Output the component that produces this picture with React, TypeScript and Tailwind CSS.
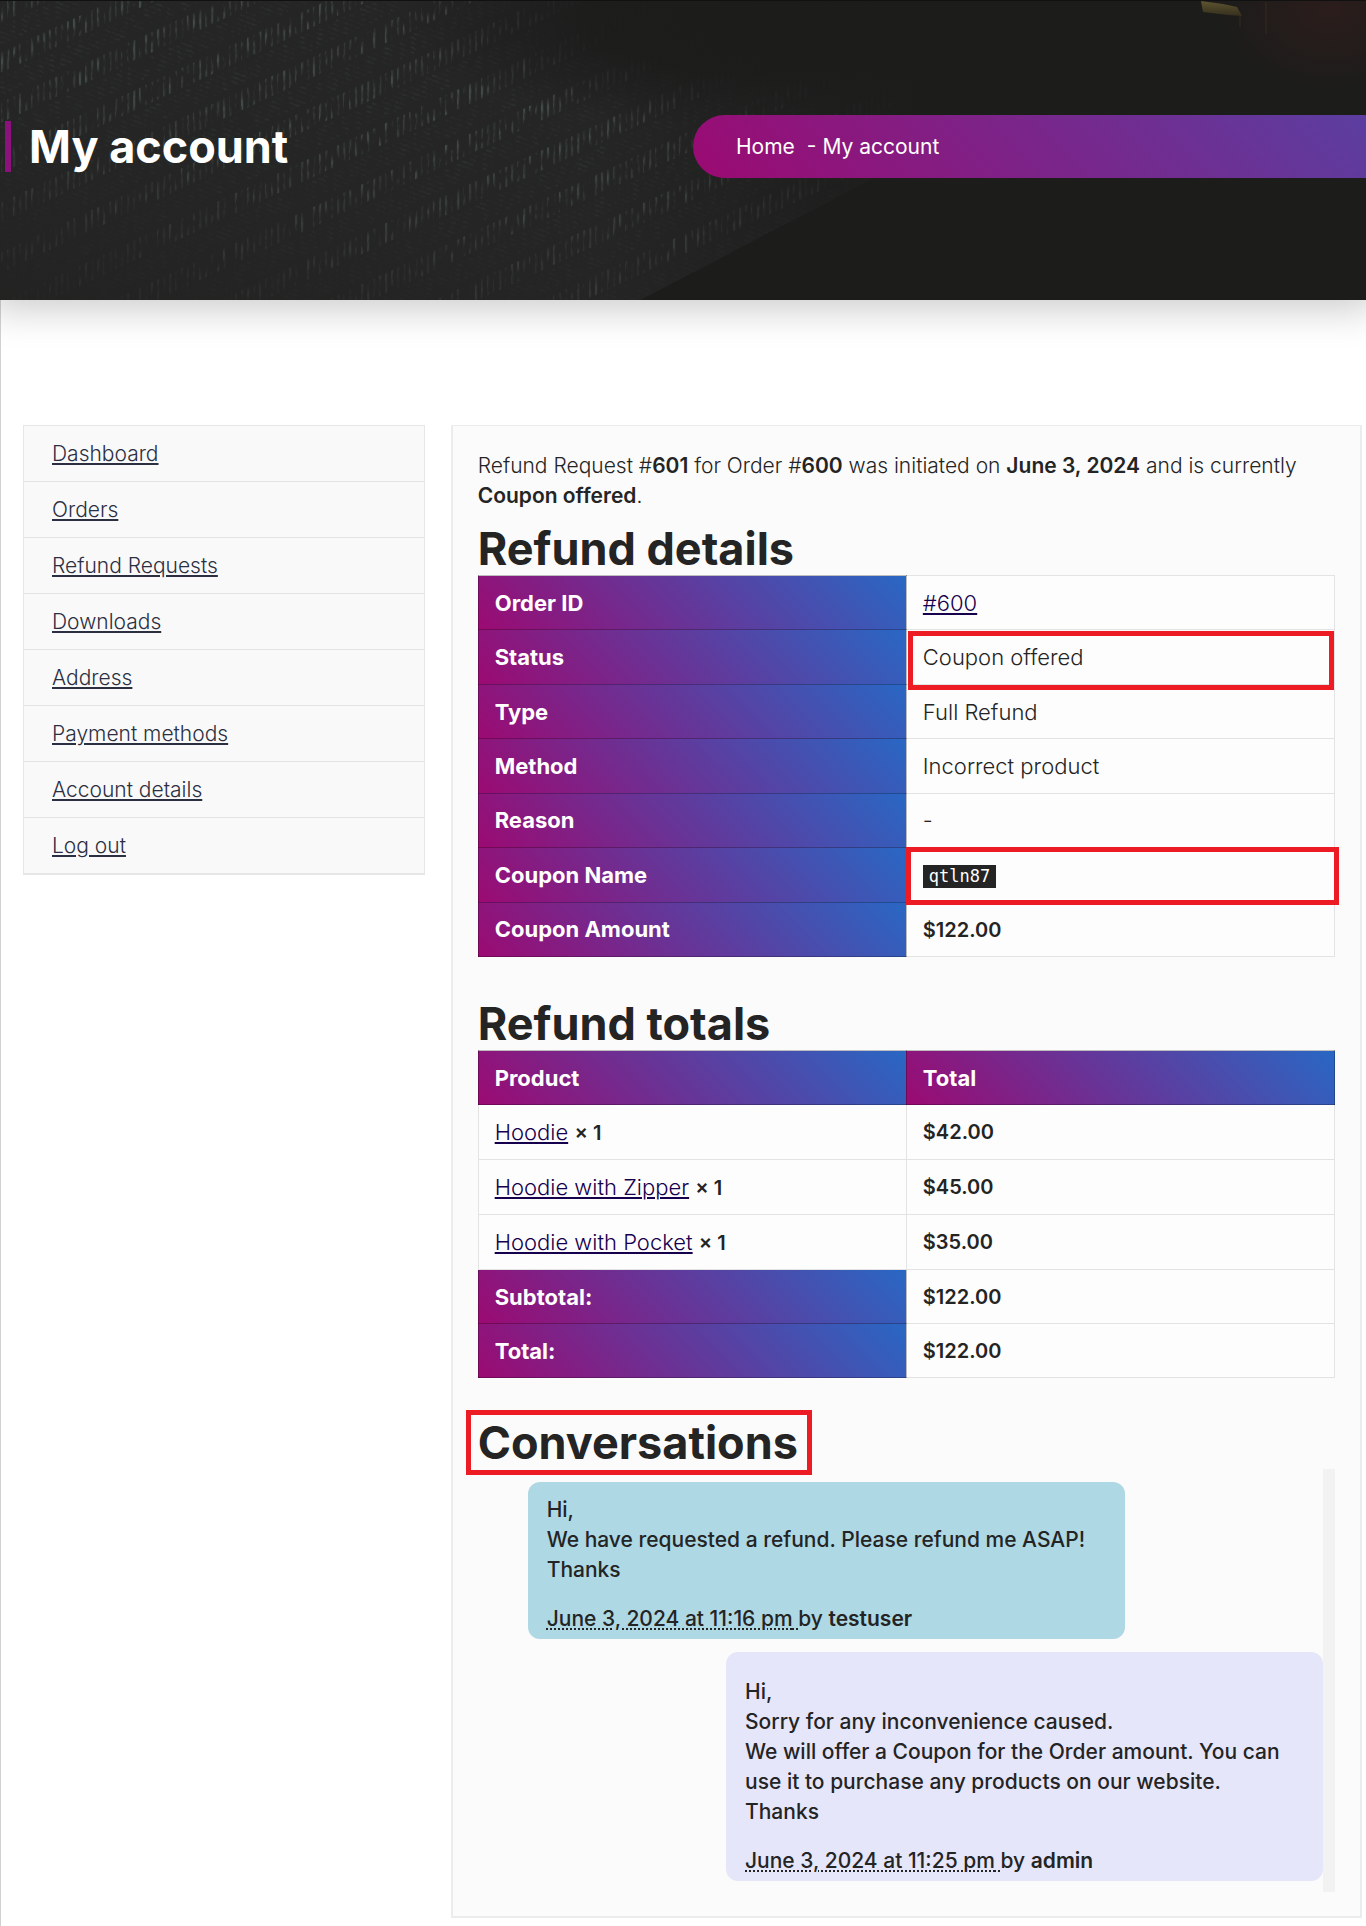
import type { ReactNode } from "react";

const NAV_ITEMS = [
  "Dashboard",
  "Orders",
  "Refund Requests",
  "Downloads",
  "Address",
  "Payment methods",
  "Account details",
  "Log out",
];

const PRODUCTS = [
  { name: "Hoodie", qty: 1, total: "$42.00" },
  { name: "Hoodie with Zipper", qty: 1, total: "$45.00" },
  { name: "Hoodie with Pocket", qty: 1, total: "$35.00" },
];

const TOTALS = [
  { label: "Subtotal:", value: "$122.00" },
  { label: "Total:", value: "$122.00" },
];

const HEAD_CELL =
  "border border-black/25 bg-[linear-gradient(45deg,#9b0a72,#2967c4)] bg-origin-border px-4 text-left font-bold text-white";
const BODY_CELL = "border border-[#e3e3e3] px-4";

// Dark herringbone cloth behind the page title
function BannerArt() {
  return (
    <svg
      className="absolute inset-0 h-full w-full"
      viewBox="0 0 1366 300"
      preserveAspectRatio="xMidYMid slice"
      aria-hidden
    >
      <defs>
        <pattern id="weave" width="6" height="50" patternUnits="userSpaceOnUse" patternTransform="skewY(-25)">
          <path d="M2 3V23" stroke="#48524e" strokeWidth="2" />
          <path d="M0 27l6 4M0 32l6 4M0 37l6 4M0 42l6 4" stroke="#313532" strokeWidth="1" />
        </pattern>
        <filter id="grain" x="0" y="0" width="100%" height="100%" colorInterpolationFilters="sRGB">
          <feTurbulence type="fractalNoise" baseFrequency="0.18 0.07" numOctaves="3" seed="4" />
          <feColorMatrix values="0 0 0 0 0.14  0 0 0 0 0.145  0 0 0 0 0.14  2.6 0 0 0 -0.6" />
        </filter>
        <linearGradient id="clothShade" x1="0" y1="1" x2="0.6" y2="0">
          <stop offset="0" stopColor="#222221" stopOpacity="0.85" />
          <stop offset="0.6" stopColor="#252625" stopOpacity="0" />
        </linearGradient>
        <linearGradient id="fadeRight">
          <stop offset="0.6" stopColor="#1c1c1b" stopOpacity="0" />
          <stop offset="0.92" stopColor="#1c1c1b" />
        </linearGradient>
        <radialGradient id="dark">
          <stop offset="0" stopColor="#1c1c1b" />
          <stop offset="0.5" stopColor="#1c1c1b" stopOpacity="0.95" />
          <stop offset="1" stopColor="#1c1c1b" stopOpacity="0" />
        </radialGradient>
        <radialGradient id="ember">
          <stop offset="0" stopColor="#2b1d1b" />
          <stop offset="1" stopColor="#2b1d1b" stopOpacity="0" />
        </radialGradient>
        <linearGradient id="brass" x1="0" y1="0" x2="0" y2="1">
          <stop offset="0" stopColor="#5e5430" />
          <stop offset="1" stopColor="#352f1d" />
        </linearGradient>
        <clipPath id="cloth">
          <path d="M0 0H1000V110L873 178L640 300H0Z" />
        </clipPath>
      </defs>
      <rect width="1366" height="300" fill="#1c1c1b" />
      <g clipPath="url(#cloth)">
        <rect width="1000" height="300" fill="#242625" />
        <rect width="1000" height="300" fill="url(#weave)" />
        <rect width="1000" height="300" filter="url(#grain)" />
        <rect width="1000" height="300" fill="url(#clothShade)" />
        <rect width="1000" height="300" fill="url(#fadeRight)" />
        <ellipse cx="790" cy="20" rx="400" ry="110" fill="url(#dark)" />
      </g>
      <ellipse cx="1330" cy="10" rx="110" ry="80" fill="url(#ember)" />
      <path d="M1201 1l22 3 14 3 5 9-14-1-25-3z" fill="url(#brass)" />
      <path d="M1240 15v12M1266 2v32" stroke="#332d1e" strokeWidth="1" />
      <rect width="1366" height="1" fill="#111" />
    </svg>
  );
}

function PageBanner() {
  return (
    <header className="relative flex h-[300px] items-center bg-[#1c1c1b] pb-2 shadow-[0_0_36px_10px_rgba(0,0,0,0.2)]">
      <BannerArt />
      <div className="relative w-[693px] shrink-0 pl-[5px]">
        <div className="flex items-center">
          <span className="h-[51px] w-[6px] bg-[#8b127c]" />
          <h1 className="ml-[18px] text-[45px] leading-[51px] font-bold text-white">My account</h1>
        </div>
      </div>
      <nav className="relative flex-1 overflow-hidden rounded-l-full" aria-label="Breadcrumb">
        <div className="w-[185%] bg-[linear-gradient(45deg,#9b0a72,#2967c4)] pl-[43px] leading-[63px] text-white">
          <a href="#">Home</a>
          <span className="ml-3">- My account</span>
        </div>
      </nav>
    </header>
  );
}

function AccountNav() {
  return (
    <nav className="w-[30%] shrink-0 self-start border border-b-2 border-[#e6e6e6] bg-[#f9f9f9]">
      <ul className="divide-y divide-[#e3e3e3]">
        {NAV_ITEMS.map((item) => (
          <li key={item} className="px-7 pt-[13px] pb-3 leading-[30px]">
            <a href="#" className="font-light text-[#2b2f42] underline decoration-2 underline-offset-2">
              {item}
            </a>
          </li>
        ))}
      </ul>
    </nav>
  );
}

function SectionTitle({ children }: { children: ReactNode }) {
  return <h2 className="text-[45px] leading-[50px] font-bold text-[#242424]">{children}</h2>;
}

function CellLink({ children }: { children: ReactNode }) {
  return (
    <a href="#" className="text-[#16004d] underline decoration-2 underline-offset-2">
      {children}
    </a>
  );
}

function DetailRow({ label, mark, children }: { label: string; mark?: ReactNode; children: ReactNode }) {
  return (
    <tr>
      <th scope="row" className={`w-1/2 ${HEAD_CELL}`}>
        {label}
      </th>
      <td className={`relative w-1/2 ${BODY_CELL}`}>
        {children}
        {mark}
      </td>
    </tr>
  );
}

function RefundDetails() {
  return (
    <table className="mt-px h-[382px] w-full table-fixed border-collapse bg-[#fdfdfd] text-[22px] leading-[30px] font-light">
      <tbody>
        <DetailRow label="Order ID">
          <CellLink>#600</CellLink>
        </DetailRow>
        <DetailRow
          label="Status"
          mark={<span className="absolute top-px right-0 -bottom-[6px] left-px border-5 border-[#ed1c24]" />}
        >
          Coupon offered
        </DetailRow>
        <DetailRow label="Type">Full Refund</DetailRow>
        <DetailRow label="Method">Incorrect product</DetailRow>
        <DetailRow label="Reason">-</DetailRow>
        <DetailRow
          label="Coupon Name"
          mark={<span className="absolute -top-px -right-[5px] -bottom-[3px] -left-px border-5 border-[#ed1c24]" />}
        >
          <code className="inline-block bg-[#242424] px-[6px] align-middle font-['DejaVu_Sans_Mono',monospace] text-[17px] leading-[23px] font-normal text-white">
            qtln87
          </code>
        </DetailRow>
        <DetailRow label="Coupon Amount">
          <span className="text-xl font-semibold">$122.00</span>
        </DetailRow>
      </tbody>
    </table>
  );
}

function RefundTotals() {
  return (
    <table className="mt-px h-[328px] w-full table-fixed border-collapse bg-[#fdfdfd] text-[22px] leading-[30px] font-light">
      <thead>
        <tr className="h-[54px]">
          <th scope="col" className={HEAD_CELL}>
            Product
          </th>
          <th scope="col" className={HEAD_CELL}>
            Total
          </th>
        </tr>
      </thead>
      <tbody>
        {PRODUCTS.map((product) => (
          <tr key={product.name} className="h-[54px]">
            <td className={BODY_CELL}>
              <CellLink>{product.name}</CellLink> <strong className="text-xl font-semibold">× {product.qty}</strong>
            </td>
            <td className={`text-xl font-semibold ${BODY_CELL}`}>{product.total}</td>
          </tr>
        ))}
      </tbody>
      <tfoot>
        {TOTALS.map((row) => (
          <tr key={row.label} className="h-[54px]">
            <th scope="row" className={HEAD_CELL}>
              {row.label}
            </th>
            <td className={`text-xl font-semibold ${BODY_CELL}`}>{row.value}</td>
          </tr>
        ))}
      </tfoot>
    </table>
  );
}

function Message({ className, time, author, children }: {
  className: string;
  time: string;
  author: string;
  children: ReactNode;
}) {
  return (
    <article className={`w-[597px] max-w-full rounded-xl px-[19px] pb-[5px] font-medium ${className}`}>
      {children}
      <p className="mt-[19px]">
        <abbr className="underline decoration-dotted decoration-2 underline-offset-2">{time} </abbr>
        by <strong className="font-semibold">{author}</strong>
      </p>
    </article>
  );
}

function Conversations() {
  return (
    <div className="mt-px border-r-12 border-[#f2f2f2] pt-[13px] pb-[11px]">
      <Message className="ml-[50px] bg-[#add8e4] pt-[13px]" time="June 3, 2024 at 11:16 pm" author="testuser">
        <p>Hi,</p>
        <p>We have requested a refund. Please refund me ASAP!</p>
        <p>Thanks</p>
      </Message>
      <Message
        className="mt-[13px] ml-auto bg-[#e6e6fa] pt-[25px]"
        time="June 3, 2024 at 11:25 pm"
        author="admin"
      >
        <p>Hi,</p>
        <p>Sorry for any inconvenience caused.</p>
        <p>We will offer a Coupon for the Order amount. You can use it to purchase any products on our website.</p>
        <p>Thanks</p>
      </Message>
    </div>
  );
}

export default function App() {
  return (
    <div className="bg-white font-['Inter',sans-serif] text-[21px] leading-[30px] text-[#242424]">
      <PageBanner />
      <main className="flex items-start gap-[26px] border-l border-[#d2d2d2] pt-[125px] pr-1 pb-2 pl-[22px]">
        <AccountNav />
        <section className="min-w-0 flex-1 border-2 border-t border-[#ececec] bg-[#fbfbfb] px-[25px] pt-[25px] pb-6">
          <p className="font-light">
            Refund Request #<b className="font-semibold">601</b> for Order #<b className="font-semibold">600</b> was
            initiated on <b className="font-semibold">June 3, 2024</b> and is currently{" "}
            <b className="font-semibold">Coupon offered</b>.
          </p>
          <div className="mt-[13px]">
            <SectionTitle>Refund details</SectionTitle>
            <RefundDetails />
          </div>
          <div className="mt-[42px]">
            <SectionTitle>Refund totals</SectionTitle>
            <RefundTotals />
          </div>
          <div className="mt-10">
            <div className="relative w-fit">
              <SectionTitle>Conversations</SectionTitle>
              <span className="absolute -top-2 -right-[14px] -bottom-[7px] -left-3 border-5 border-[#ed1c24]" />
            </div>
            <Conversations />
          </div>
        </section>
      </main>
    </div>
  );
}
